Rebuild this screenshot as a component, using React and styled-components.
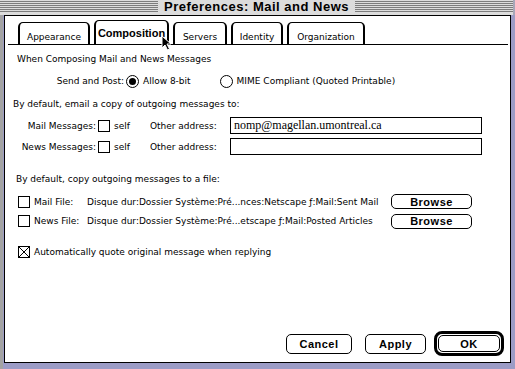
import React from "react";
import styled, { createGlobalStyle } from "styled-components";

const Global = createGlobalStyle`
  html, body { margin: 0; padding: 0; background: #a9a9b9; }
  body { font-family: "DejaVu Sans", Verdana, sans-serif; }
`;

const Screen = styled.div`
  position: relative;
  width: 515px;
  height: 369px;
  overflow: hidden;
  background: #a7a7b8;
`;

const TitleBar = styled.div`
  height: 15px;
  background-color: #dcdcdc;
  background-image: repeating-linear-gradient(
    to bottom,
    #dcdcdc 0px,
    #dcdcdc 1px,
    #7c7c7c 1px,
    #7c7c7c 2px
  );
  background-size: 100% 12px;
  background-repeat: no-repeat;
  display: flex;
  justify-content: center;
  align-items: flex-start;
  margin-right: 2px;
`;

const Title = styled.div`
  background: #dcdcdc;
  padding: 0 6px;
  height: 14px;
  line-height: 14px;
  font-family: "Liberation Sans", Arial, sans-serif;
  font-weight: bold;
  font-size: 13px;
  letter-spacing: 0.5px;
  color: #000;
`;

const Frame = styled.div`
  display: flex;
  padding-left: 3px;
  background: linear-gradient(to right, #a3a3a3 0px, #a3a3a3 3px, #9c9cc6 3px);
  height: 354px;
`;

const Panel = styled.div`
  box-sizing: border-box;
  width: 507px;
  height: 348px;
  margin-left: 1px;
  background: #fff;
  border: 1px solid #000;
  display: flex;
  flex-direction: column;
  font-size: 9px;
  color: #000;
`;

const TabBar = styled.div`
  display: flex;
  align-items: flex-end;
  gap: 4px;
  margin: 4px 0 0 3px;
  width: 500px;
  height: 25px;
  box-sizing: border-box;
  padding-left: 10px;
  border-bottom: 1px solid #000;
`;

const Tab = styled.div`
  box-sizing: border-box;
  width: ${p => p.w}px;
  height: ${p => (p.active ? 24 : 22)}px;
  border: 1px solid #000;
  border-left-width: 2px;
  border-right-width: 2px;
  border-bottom: none;
  border-radius: 5px 5px 0 0;
  display: flex;
  align-items: center;
  justify-content: center;
  padding-top: ${p => (p.active ? 1 : 7)}px;
  font-family: ${p => (p.active ? `"Liberation Sans", Arial, sans-serif` : "inherit")};
  font-size: ${p => (p.active ? 11 : 9)}px;
  font-weight: ${p => (p.active ? "bold" : "normal")};
`;

const Row = styled.div`
  display: flex;
  align-items: center;
  height: ${p => p.h || 14}px;
  margin-top: ${p => p.mt || 0}px;
  padding-left: ${p => p.pl || 0}px;
  white-space: nowrap;
`;

const Label = styled.span`
  display: inline-block;
  width: ${p => p.w}px;
  text-align: ${p => (p.right ? "right" : "left")};
  margin-left: ${p => p.ml || 0}px;
  flex-shrink: 0;
  overflow: hidden;
`;

const Box = styled.span`
  box-sizing: border-box;
  width: 12px;
  height: 12px;
  border: 1px solid #000;
  flex-shrink: 0;
  margin-left: ${p => p.ml || 0}px;
  margin-right: 4px;
  display: inline-flex;
`;

const Radio = styled.span`
  box-sizing: border-box;
  width: 13px;
  height: 13px;
  border: 1px solid #000;
  border-radius: 50%;
  flex-shrink: 0;
  margin-left: ${p => p.ml || 0}px;
  margin-right: 4px;
  display: inline-flex;
  align-items: center;
  justify-content: center;
  &::after {
    content: "";
    width: 7px;
    height: 7px;
    border-radius: 50%;
    background: ${p => (p.on ? "#000" : "transparent")};
  }
`;

const Field = styled.div`
  box-sizing: border-box;
  width: 252px;
  height: 17px;
  border: 1px solid #000;
  margin-left: ${p => p.ml || 0}px;
  padding-left: 3px;
  font-family: "Liberation Serif", "Times New Roman", serif;
  font-size: 12px;
  line-height: 15px;
`;

const Button = styled.div`
  box-sizing: border-box;
  width: ${p => p.w}px;
  height: ${p => p.h || 15}px;
  border: 1px solid #000;
  border-radius: 5px;
  display: flex;
  align-items: center;
  justify-content: center;
  font-family: "Liberation Sans", Arial, sans-serif;
  font-weight: bold;
  font-size: 11px;
  letter-spacing: 0.5px;
  margin-left: ${p => p.ml || 0}px;
  flex-shrink: 0;
`;

const DefaultRing = styled.div`
  box-sizing: border-box;
  border: 3px solid #000;
  border-radius: 8px;
  padding: 1px;
  margin-left: ${p => p.ml || 0}px;
  display: flex;
`;

const Footer = styled.div`
  margin-top: auto;
  display: flex;
  align-items: center;
  justify-content: flex-end;
  padding: 0 6px 6px 0;
`;

const Cursor = styled.svg`
  position: absolute;
  left: 161px;
  top: 35px;
`;

const Check = () => (
  <svg width="10" height="10" viewBox="0 0 10 10">
    <path d="M0 0L10 10M10 0L0 10" stroke="#000" strokeWidth="1" />
  </svg>
);

const tabs = [
  ["Appearance", 72],
  ["Composition", 75, true],
  ["Servers", 54],
  ["Identity", 52],
  ["Organization", 78],
];

export default function App() {
  return (
    <Screen>
      <Global />
      <TitleBar>
        <Title>Preferences: Mail and News</Title>
      </TitleBar>
      <Frame>
        <Panel>
          <TabBar>
            {tabs.map(([name, w, active]) => (
              <Tab key={name} w={w} active={active}>
                {name}
              </Tab>
            ))}
          </TabBar>

          <Row mt={7} pl={12}>When Composing Mail and News Messages</Row>

          <Row mt={7} h={16}>
            <Label w={119} right>Send and Post:</Label>
            <Radio on ml={2} />
            <span>Allow 8-bit</span>
            <Radio ml={29} />
            <span>MIME Compliant (Quoted Printable)</span>
          </Row>

          <Row mt={8} pl={8}>By default, email a copy of outgoing messages to:</Row>

          <Row mt={6} h={17}>
            <Label w={91} right>Mail Messages:</Label>
            <Box ml={2} />
            <span>self</span>
            <Label w={70} ml={20}>Other address:</Label>
            <Field ml={10}>nomp@magellan.umontreal.ca</Field>
          </Row>

          <Row mt={4} h={17}>
            <Label w={91} right>News Messages:</Label>
            <Box ml={2} />
            <span>self</span>
            <Label w={70} ml={20}>Other address:</Label>
            <Field ml={10} />
          </Row>

          <Row mt={17} pl={11}>By default, copy outgoing messages to a file:</Row>

          <Row mt={8} h={15}>
            <Box ml={13} />
            <Label w={53}>Mail File:</Label>
            <Label w={304}>Disque dur:Dossier Système:Pré...nces:Netscape ƒ:Mail:Sent Mail</Label>
            <Button w={81} ml={0}>Browse</Button>
          </Row>

          <Row mt={4} h={16}>
            <Box ml={13} />
            <Label w={53}>News File:</Label>
            <Label w={304}>Disque dur:Dossier Système:Pré...etscape ƒ:Mail:Posted Articles</Label>
            <Button w={81} ml={0}>Browse</Button>
          </Row>

          <Row mt={16} h={14}>
            <Box ml={13}>
              <Check />
            </Box>
            <span>Automatically quote original message when replying</span>
          </Row>

          <Footer>
            <Button w={66} h={20}>Cancel</Button>
            <Button w={61} h={20} ml={13}>Apply</Button>
            <DefaultRing ml={8}>
              <Button w={62} h={17}>OK</Button>
            </DefaultRing>
          </Footer>
        </Panel>
      </Frame>
      <Cursor width="12" height="16" viewBox="0 0 12 16">
        <path d="M1 1 L1 13 L4 10 L6.5 15 L8.5 14 L6 9 L10 9 Z" fill="#000" stroke="#fff" strokeWidth="1" />
      </Cursor>
    </Screen>
  );
}
